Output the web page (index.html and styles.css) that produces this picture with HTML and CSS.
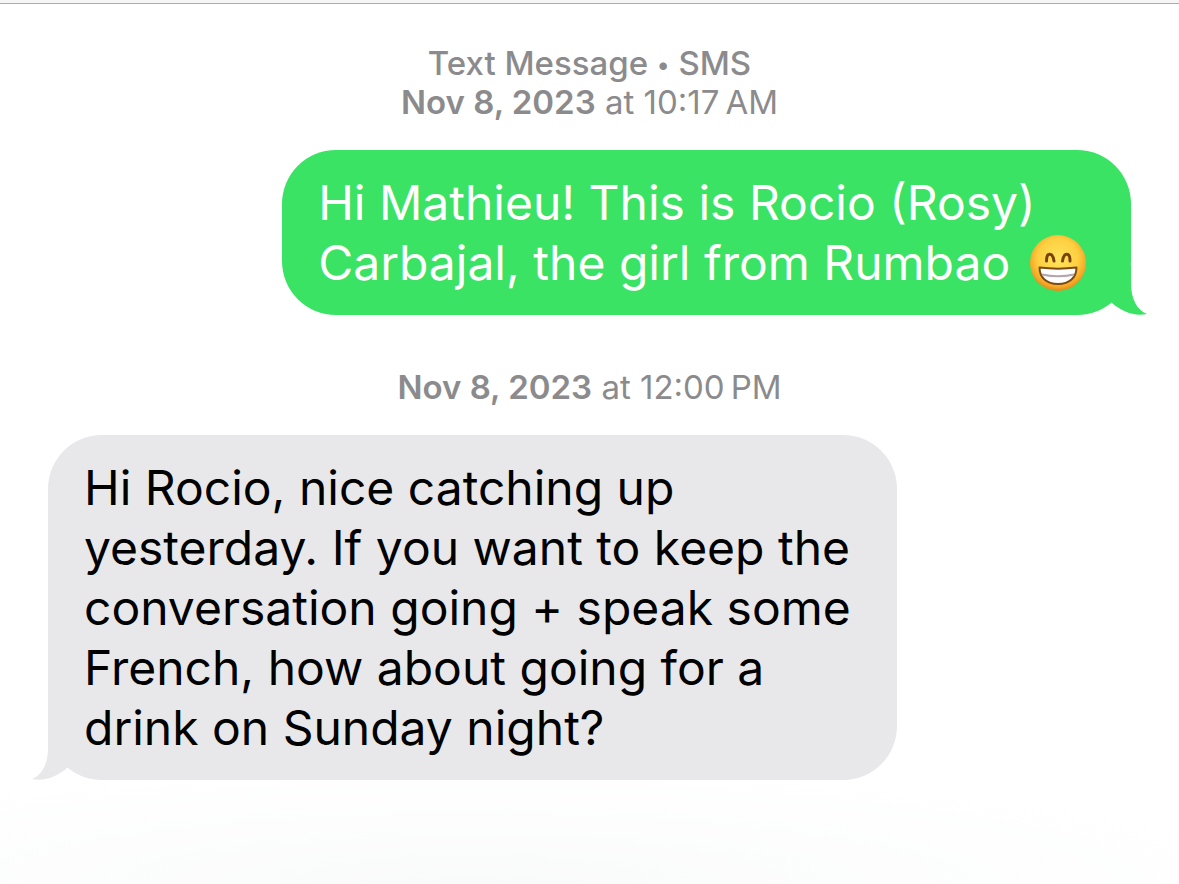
FILE: index.html
```html
<!DOCTYPE html>
<html lang="en">
<head>
    <meta charset="UTF-8">
    <meta name="viewport" content="width=device-width, initial-scale=1.0">
    <title>Messages</title>
    <link rel="stylesheet" href="styles.css">
</head>
<body>
    <header class="top-bar"></header>
    <main class="thread">
        <div class="stamp">
            <p class="service">Text Message <span class="dot">•</span> SMS</p>
            <p><time datetime="2023-11-08T10:17"><b>Nov 8, 2023</b> at 10:17&#8239;AM</time></p>
        </div>
        <div class="bubble sent">
            <p>Hi Mathieu! This is Rocio (Rosy) Carbajal, the girl from Rumbao
                <svg class="emoji" viewBox="0 0 56 56" role="img" aria-label="Beaming face with smiling eyes">
                    <defs>
                        <radialGradient id="face" cx="50%" cy="42%" r="60%">
                            <stop offset="0" stop-color="#ffe45c"/>
                            <stop offset="0.6" stop-color="#fdcf40"/>
                            <stop offset="0.85" stop-color="#f4a626"/>
                            <stop offset="1" stop-color="#dd7f1a"/>
                        </radialGradient>
                    </defs>
                    <circle cx="28" cy="28" r="28" fill="url(#face)"/>
                    <g fill="none" stroke="#7a4208" stroke-width="3" stroke-linecap="round">
                        <path d="M16.500 26c0-9 6-9 7.500 0"/>
                        <path d="M32.500 26c1.500-9 7.500-9 7.500 0"/>
                    </g>
                    <path d="M9.500 32.500c12 1.500 25 1.500 37 0c0 10-7 16.500-18.500 16.500s-18.500-6.500-18.500-16.500z" fill="#fff" stroke="#7a4a12" stroke-width="2" stroke-linejoin="round"/>
                    <path d="M12 39.500c11 2.500 21 2.500 32 0" fill="none" stroke="#b3a6ac" stroke-width="2"/>
                </svg>
            </p>
            <svg class="tail" viewBox="0 0 46 50" aria-hidden="true">
                <path d="M30 0V18C30 34 36 45 46 49C33 52 20 46 11 38L0 20Z"/>
            </svg>
        </div>
        <div class="stamp">
            <p><time datetime="2023-11-08T12:00"><b>Nov 8, 2023</b> at 12:00&#8239;PM</time></p>
        </div>
        <div class="bubble received">
            <p>Hi Rocio, nice catching up yesterday. If you want to keep the conversation going + speak some French, how about going for a drink on Sunday night?</p>
            <svg class="tail" viewBox="0 0 46 50" aria-hidden="true">
                <path d="M30 0V18C30 34 36 45 46 49C33 52 20 46 11 38L0 20Z"/>
            </svg>
        </div>
    </main>
</body>
</html>
```
FILE: styles.css
```css
:root {
    --sent: #3ae363;
    --received: #e8e8ea;
    --stamp: #8b8b8d;
}

* {
    margin: 0;
    padding: 0;
    box-sizing: border-box;
}

body {
    font-family: Inter, "Liberation Sans", sans-serif;
    background: #fff radial-gradient(ellipse 70% 120px at 40% 100%, #f9fbfa, #fff) no-repeat;
    display: flex;
    flex-direction: column;
    min-height: 100vh;
}

.top-bar {
    height: 4px;
    background-color: #f6f6f6;
    border-bottom: 1px solid #adadad;
}

.thread {
    flex-grow: 1;
    display: flex;
    flex-direction: column;
    padding: 40px 48px;
}

.stamp {
    margin-bottom: 28px;
    text-align: center;
    color: var(--stamp);
    font-size: 33px;
    line-height: 39px;
}

.stamp b {
    font-weight: 600;
}

.service {
    font-weight: 500;
}

.dot {
    font-size: 24px;
    line-height: 24px;
    vertical-align: 2px;
}

.bubble {
    position: relative;
    width: 72vw;
    padding: 23px 36px 22px;
    border-radius: 54px;
    font-size: 48px;
    line-height: 60px;
}

.sent {
    align-self: flex-end;
    margin-bottom: 53px;
    background-color: var(--sent);
    color: #fff;
}

.received {
    align-self: flex-start;
    background-color: var(--received);
    color: #000;
}

.tail {
    position: absolute;
    bottom: 0;
    width: 46px;
    height: 50px;
}

.sent .tail {
    right: -16px;
    fill: var(--sent);
}

.received .tail {
    left: -16px;
    transform: scaleX(-1);
    fill: var(--received);
}

.emoji {
    width: 56px;
    height: 56px;
    margin: 2px 0 2px 6px;
    vertical-align: top;
}
```
